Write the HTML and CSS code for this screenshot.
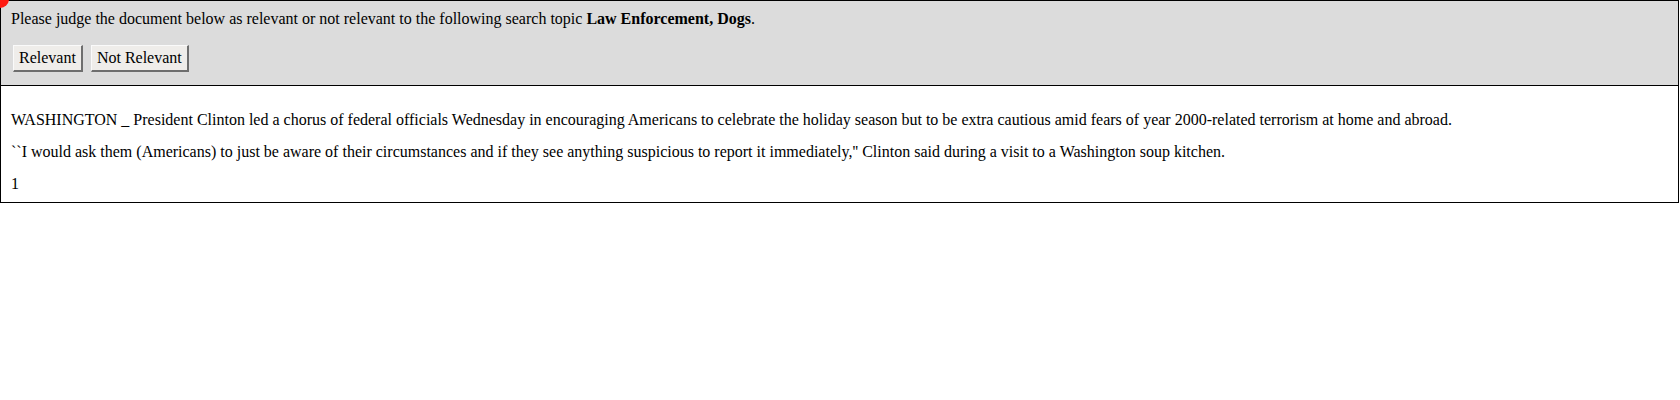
FILE: index.html
```html
<!DOCTYPE html>
<html>
<head>
<meta charset="utf-8">
<link rel="stylesheet" href="styles.css">
</head>
<body>
<div class="dot"></div>
<div class="panel">
  <div class="prompt">
    <p class="question">Please judge the document below as relevant or not relevant to the following search topic <b>Law Enforcement, Dogs</b>.</p>
    <div class="actions">
      <button class="btn">Relevant</button>
      <button class="btn">Not Relevant</button>
    </div>
  </div>
  <div class="doc">
    <p>WASHINGTON _ President Clinton led a chorus of federal officials Wednesday in encouraging Americans to celebrate the holiday season but to be extra cautious amid fears of year 2000-related terrorism at home and abroad.</p>
    <p>``I would ask them (Americans) to just be aware of their circumstances and if they see anything suspicious to report it immediately,'' Clinton said during a visit to a Washington soup kitchen.</p>
    <p>1</p>
  </div>
</div>
</body>
</html>
```
FILE: styles.css
```css
html, body {
  margin: 0;
  padding: 0;
  background: #fff;
}
body {
  font-family: "Liberation Serif", "Times New Roman", serif;
  font-size: 16px;
  color: #000;
}
.dot {
  position: absolute;
  left: -9px;
  top: -10px;
  width: 18px;
  height: 18px;
  border-radius: 50%;
  background: #ff1a12;
  z-index: 2;
}
.panel {
  border: 1px solid #000;
  margin-right: 1px;
}
.prompt {
  background: #dcdcdc;
  border-bottom: 1px solid #000;
  padding: 8px 10px 13px;
}
.question {
  margin: 0 0 17px;
  line-height: 19px;
}
.actions {
  display: flex;
  gap: 8px;
  padding-left: 2px;
}
.btn {
  font-family: "Liberation Serif", "Times New Roman", serif;
  font-size: 16px;
  background: #efedea;
  color: #000;
  border-style: solid;
  border-color: #fafafa #6e6e6e #6e6e6e #fafafa;
  border-width: 1px 2px 2px 1px;
  padding: 0 5px;
  height: 27px;
  line-height: 18px;
  margin: 0;
}
.doc {
  padding: 25px 10px 9px;
}
.doc p {
  margin: 0 0 14px;
  line-height: 18px;
}
.doc p:last-child {
  margin-bottom: 0;
}
```
